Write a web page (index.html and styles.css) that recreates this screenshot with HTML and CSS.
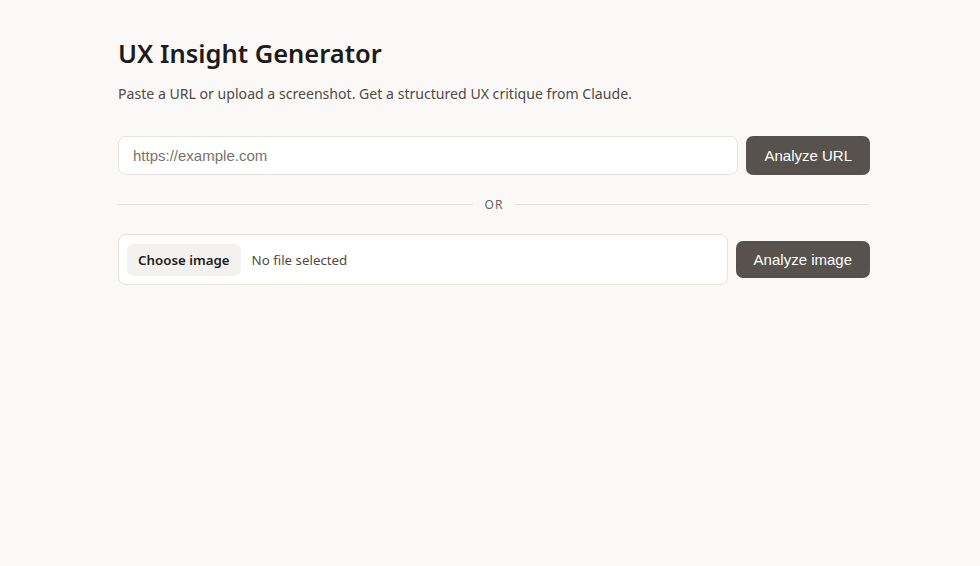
FILE: index.html
```html
<!DOCTYPE html>
<html lang="en">
<head>
    <meta charset="UTF-8">
    <meta name="viewport" content="width=device-width, initial-scale=1.0">
    <title>UX Insight Generator</title>
    <link rel="stylesheet" href="styles.css">
</head>
<body>
    <main class="container">
        <h1 class="title">UX Insight Generator</h1>
        <p class="subtitle">Paste a URL or upload a screenshot. Get a structured UX critique from Claude.</p>

        <!-- URL analysis -->
        <form class="row url-row" onsubmit="return false">
            <input class="url-input" type="url" placeholder="https://example.com">
            <button class="btn" type="submit">Analyze URL</button>
        </form>

        <div class="divider"><span>OR</span></div>

        <!-- Screenshot upload -->
        <form class="row file-row" onsubmit="return false">
            <label class="file-box">
                <span class="file-btn">Choose image</span>
                <span class="file-name">No file selected</span>
                <input class="file-input" type="file" accept="image/*">
            </label>
            <button class="btn btn-image" type="submit">Analyze image</button>
        </form>
    </main>
</body>
</html>
```

FILE: styles.css
```css
body {
    margin: 0;
    padding-left: 8px;
    background: #faf9f7;
    font-family: 'Noto Sans', 'Open Sans', sans-serif;
    color: #1f1b18;
}

.container {
    max-width: 752px;
    margin: 0 auto;
    padding: 37px 0;
}

.title {
    font-size: 25.5px;
    font-weight: 600;
    margin: 0 0 14px;
    line-height: 1.3;
}

.subtitle {
    font-size: 14.1px;
    color: #4f4a45;
    margin: 0 0 33px;
}

.row {
    display: flex;
    align-items: center;
    gap: 8px;
    margin: 0;
}

.url-input {
    flex: 1;
    height: 39px;
    box-sizing: border-box;
    border: 1px solid #e6e3df;
    border-radius: 8px;
    background: #fff;
    padding: 0 14px;
    font-family: 'Liberation Sans', Arial, sans-serif;
    font-size: 15px;
    color: #1f1b18;
    outline: none;
}

.url-input::placeholder {
    color: #77726d;
}

.btn {
    height: 39px;
    padding: 0 18px;
    border: none;
    border-radius: 7px;
    background: #57524d;
    color: #fff;
    font-family: 'Liberation Sans', Arial, sans-serif;
    font-size: 15px;
    cursor: pointer;
}

.btn-image {
    height: 37px;
}

.divider {
    display: flex;
    align-items: center;
    gap: 12px;
    margin: 21px 0;
    font-size: 12px;
    letter-spacing: 1px;
    color: #6b6560;
}

.divider::before,
.divider::after {
    content: '';
    flex: 1;
    border-top: 1px solid #e6e3df;
}

.file-box {
    flex: 1;
    display: flex;
    align-items: center;
    gap: 11px;
    height: 51px;
    box-sizing: border-box;
    padding: 0 8px;
    border: 1px solid #e6e3df;
    border-radius: 8px;
    background: #fff;
    cursor: pointer;
}

.file-btn {
    padding: 7px 11px;
    border-radius: 6px;
    background: #f3f2f0;
    font-size: 13.3px;
    font-weight: 600;
    color: #1f1b18;
}

.file-name {
    font-size: 13.3px;
    color: #4f4a45;
}

.file-input {
    display: none;
}
```
